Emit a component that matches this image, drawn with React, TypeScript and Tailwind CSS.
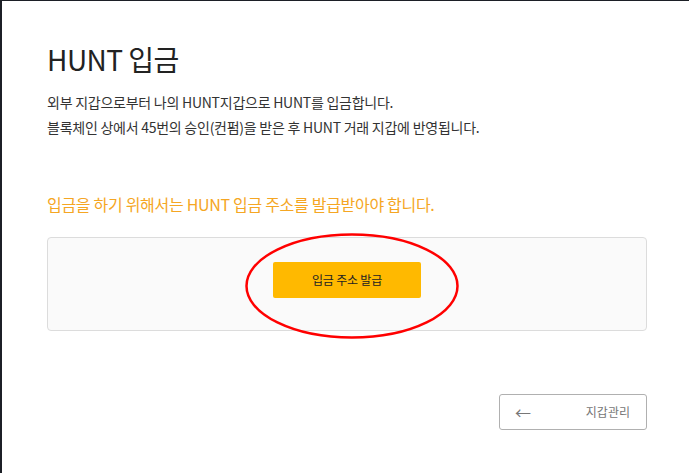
import React from "react";

export default function App() {
  return (
    <div
      className="relative w-[689px] h-[473px] bg-white border-l-2 border-t border-[#1c1f26] overflow-hidden"
      style={{ fontFamily: '"Noto Sans CJK KR", "Noto Sans", sans-serif' }}
    >
      <div className="pl-[45px] pr-[40px] pt-[38px]">
        <h1 className="text-[28px] leading-[40px] text-[#222] font-normal tracking-[-0.5px]">HUNT 입금</h1>
        <div className="mt-[11px] text-[14px] leading-[25px] text-[#333] tracking-[-0.25px]">
          <p>외부 지갑으로부터 나의 HUNT지갑으로 HUNT를 입금합니다.</p>
          <p>블록체인 상에서 45번의 승인(컨펌)을 받은 후 HUNT 거래 지갑에 반영됩니다.</p>
        </div>
        <p className="mt-[52px] text-[16px] leading-[24px] text-[#f5a623] tracking-[-0.3px]">
          입금을 하기 위해서는 HUNT 입금 주소를 발급받아야 합니다.
        </p>
        <div className="relative mt-[21px] w-[600px] h-[94px] bg-[#fafafa] border border-[#dcdcdc] rounded-[4px] flex justify-center pt-[24px]">
          <button className="w-[148px] h-[36px] bg-[#ffb900] rounded-[2px] text-[12px] text-[#222] tracking-[-0.2px]">
            입금 주소 발급
          </button>
          <svg
            className="absolute left-[196px] top-[-6px] pointer-events-none"
            width="216"
            height="108"
            viewBox="0 0 216 108"
          >
            <ellipse cx="108" cy="54" rx="105.5" ry="51.5" fill="none" stroke="#ff0000" strokeWidth="2.5" />
          </svg>
        </div>
        <div className="mt-[63px] flex justify-end w-[600px]">
          <button className="w-[148px] h-[36px] border border-[#b0b0b0] rounded-[3px] flex items-center justify-between pl-[15px] pr-[16px] text-[#777]">
            <span className="text-[16px] leading-none">←</span>
            <span className="text-[12px]">지갑관리</span>
          </button>
        </div>
      </div>
    </div>
  );
}
